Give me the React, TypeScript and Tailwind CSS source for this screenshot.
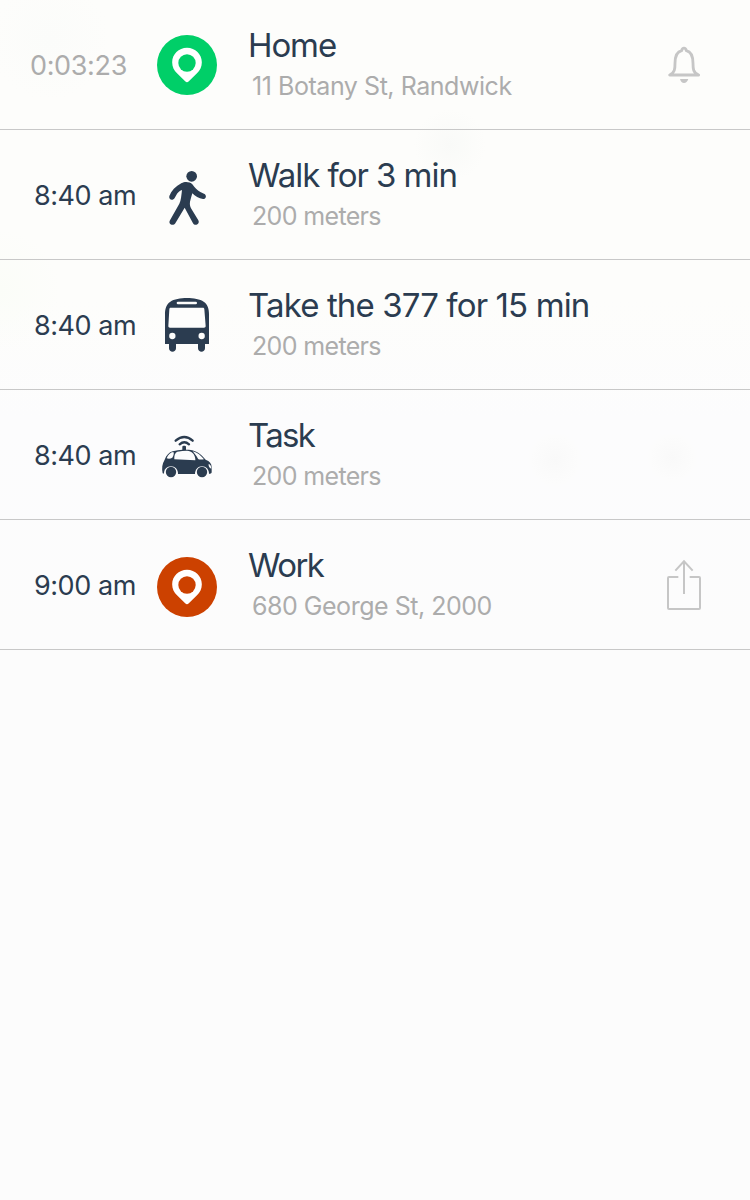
import type { ReactNode } from "react";

function PinIcon({ className }: { className: string }) {
  return (
    <svg viewBox="0 0 240 240" className={`size-20 ${className}`}>
      <circle cx="120" cy="120" r="90" fill="currentColor" />
      <path
        d="M120 68.500C95 68.500 75.500 88 75.500 112C75.500 126 81 136 90 145L114.500 169Q120 174.500 125.500 169L150 145C159 136 164.500 126 164.500 112C164.500 88 145 68.500 120 68.500Z"
        fill="#fff"
      />
      <circle cx="120" cy="114" r="26" fill="currentColor" />
    </svg>
  );
}

function WalkIcon() {
  return (
    <svg viewBox="0 0 240 240" className="size-20">
      <circle cx="134" cy="64" r="16" />
      <path d="M104 84C112 79 129 79 136 88C144 98 150 107 160 111L171 116C180 120 178 132 168 132C156 131 144 124 136 115C134 123 131 131 129 140C128 149 129 153 132 160L154 196C160 207 144 215 138 205L113 158L85 205C78 215 62 207 69 196L97 146C102 137 103 121 105 105C97 108 92 113 88 120L83 129C78 138 64 135 67 123C73 107 85 94 104 84Z" />
    </svg>
  );
}

function BusIcon() {
  return (
    <svg viewBox="0 0 240 240" className="size-20">
      <path d="M54 177V88C54 72 58 57 70 50C91 35 149 35 170 50C182 57 186 72 186 88V177H174V190C174 204 153 204 153 190V177H87V190C87 204 66 204 66 190V177Z" />
      <path d="M72 68H167C171 68 172 70 172 73L176 123C176 127 174 128 171 128H69C66 128 64 127 64 123L67 73C67 70 68 68 72 68Z" fill="#fdfdfc" />
      <rect x="89" y="50" width="61" height="8" rx="4" fill="#fdfdfc" />
      <circle cx="76" cy="153" r="9.500" fill="#fdfdfc" />
      <circle cx="164" cy="153" r="9.500" fill="#fdfdfc" />
    </svg>
  );
}

function CarIcon() {
  return (
    <svg viewBox="0 0 240 210" className="h-[70px] w-20">
      <path d="M47 160C44 144 45 132 53 119C58 106 66 97 77 94C88 90 97 90 106 89V80C106 76 117 76 117 80V89C139 89 151 94 165 107L176 119C188 123 194 131 194 142V157C194 161 190 162 185 162H54Z" />
      <g fill="#fcfcfd">
        <path d="M91 95C101 93 111 92 120 92C135 93 143 102 145 117V121L82 118C81 106 84 98 91 95Z" />
        <path d="M59 115C63 104 70 97 79 96C82 98 80 107 76 113C70 117 64 117 59 115Z" />
        <path d="M137 94C152 98 162 107 171 118C161 119 156 119 153 116C148 107 143 101 137 94Z" />
        <path d="M185 131C191 134 193 139 193 146C187 144 184 139 185 131Z" />
        <path d="M51 160C51 148 60 139 72 139S93 148 93 162V172H51Z" />
        <path d="M144 162C144 149 153 139 165 139S186 148 186 162V172H144Z" />
      </g>
      <circle cx="72" cy="156" r="15.500" />
      <circle cx="165" cy="156" r="15.500" />
      <g fill="none" stroke="currentColor" strokeWidth="7" strokeLinecap="round">
        <path d="M86 62Q112 40 137 62" />
        <path d="M98 73Q112 61 126 73" />
      </g>
    </svg>
  );
}

function BellIcon() {
  return (
    <svg viewBox="0 0 210 210" className="size-[70px] text-[#c6c6c6]">
      <path
        d="M59 135C75 128 75 115 75 100C75 77 81 65 95 62C97 52 107 52 109 62C123 65 129 77 129 100C129 115 129 128 146 135Z"
        fill="none"
        stroke="currentColor"
        strokeWidth="8.500"
        strokeLinejoin="round"
      />
      <path d="M90 147H115C112 155 108 159 102 159S92 155 90 147Z" fill="currentColor" />
    </svg>
  );
}

function ShareIcon() {
  return (
    <svg
      viewBox="0 0 210 210"
      className="size-[70px]"
      fill="none"
      stroke="#c6c6c6"
      strokeWidth="6"
    >
      <path d="M85 81H57Q54 81 54 84V174Q54 177 57 177H147Q150 177 150 174V84Q150 81 147 81H119" />
      <path d="M102 132V35M76 62L102 34L128 62" />
    </svg>
  );
}

interface Step {
  time: string;
  timeClass: string;
  icon: ReactNode;
  iconClass: string;
  title: string;
  titleClass: string;
  detail: string;
  detailClass: string;
  action?: ReactNode;
}

const steps: Step[] = [
  {
    time: "0:03:23",
    timeClass: "pl-[30px] text-[#acacac] tracking-[-0.35px]",
    icon: <PinIcon className="text-[#00cf68]" />,
    iconClass: "pt-[25px]",
    title: "Home",
    titleClass: "tracking-[-1.1px]",
    detail: "11 Botany St, Randwick",
    detailClass: "tracking-[-0.45px]",
    action: <BellIcon />,
  },
  {
    time: "8:40 am",
    timeClass: "pl-[34px] tracking-[-0.45px]",
    icon: <WalkIcon />,
    iconClass: "pt-[25px]",
    title: "Walk for 3 min",
    titleClass: "tracking-[-1.05px]",
    detail: "200 meters",
    detailClass: "tracking-[-0.65px]",
  },
  {
    time: "8:40 am",
    timeClass: "pl-[34px] tracking-[-0.45px]",
    icon: <BusIcon />,
    iconClass: "pt-[25px]",
    title: "Take the 377 for 15 min",
    titleClass: "tracking-[-0.88px]",
    detail: "200 meters",
    detailClass: "tracking-[-0.65px]",
  },
  {
    time: "8:40 am",
    timeClass: "pl-[34px] tracking-[-0.45px]",
    icon: <CarIcon />,
    iconClass: "pt-[30px]",
    title: "Task",
    titleClass: "tracking-[-1.7px]",
    detail: "200 meters",
    detailClass: "tracking-[-0.65px]",
  },
  {
    time: "9:00 am",
    timeClass: "pl-[34px] tracking-[-0.45px]",
    icon: <PinIcon className="text-[#cc4100]" />,
    iconClass: "pt-[27px]",
    title: "Work",
    titleClass: "tracking-[-1.6px]",
    detail: "680 George St, 2000",
    detailClass: "tracking-[-0.48px]",
    action: <ShareIcon />,
  },
];

function StepRow({ step }: { step: Step }) {
  return (
    <li className="flex h-[130px] items-start border-b border-[#c8c8c8]">
      <time className={`w-[147px] shrink-0 pt-[46px] text-[27px] leading-10 whitespace-nowrap ${step.timeClass}`}>
        {step.time}
      </time>
      <div className={`w-20 shrink-0 fill-current ${step.iconClass}`}>{step.icon}</div>
      <div className="w-[423px] shrink-0 pt-[25px] pl-[21px] whitespace-nowrap">
        <h2 className={`text-[33px] leading-10 ${step.titleClass}`}>{step.title}</h2>
        <p className={`pt-[3px] pl-1 text-[25px] leading-9 text-[#acacac] ${step.detailClass}`}>{step.detail}</p>
      </div>
      <div className="pt-[30px]">{step.action}</div>
    </li>
  );
}

export default function App() {
  return (
    <main className="h-[1200px] w-[750px] overflow-hidden bg-[#fcfcfc] bg-[radial-gradient(circle_at_555px_460px,#f9f9f9_0,#fcfcfc_24px,transparent_28px),radial-gradient(circle_at_672px_458px,#f9f9f9_0,#fcfcfc_22px,transparent_26px),radial-gradient(circle_at_450px_145px,#f9faf8_0,transparent_36px),radial-gradient(circle_at_50px_40px,#fbfcfa_0,transparent_60px),radial-gradient(circle_at_0px_290px,#fbfdf8_0,transparent_60px),linear-gradient(to_bottom,#fdfdfb_0,#fdfdfb_300px,#fcfcfd_420px,#fcfcfc_650px)] font-['Inter',sans-serif] text-[#2b3c50]">
      <ol>
        {steps.map((step) => (
          <StepRow key={step.title} step={step} />
        ))}
      </ol>
    </main>
  );
}
